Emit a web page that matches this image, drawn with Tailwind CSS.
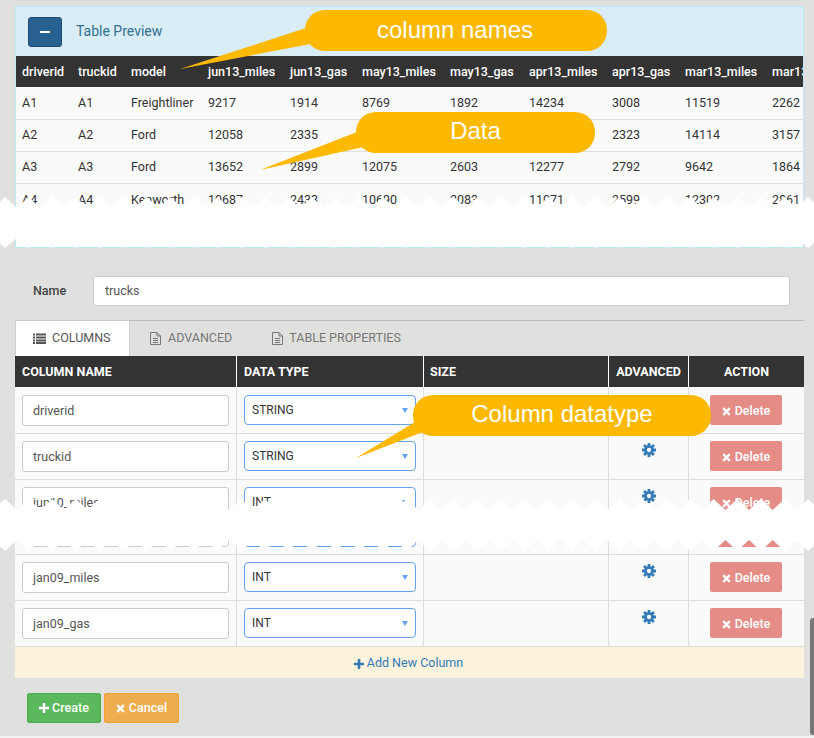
<!DOCTYPE html>
<html>
<head>
<meta charset="UTF-8">
<title>Table Preview</title>
<script src="https://cdn.jsdelivr.net/npm/@tailwindcss/browser@4"></script>
</head>
<body class="relative h-[738px] w-[814px] overflow-hidden bg-[#e0e0de] font-['Roboto',sans-serif] text-[12.5px] text-[#333]">

<!-- preview panel -->
<div class="ml-[15px] mt-[6px] h-[242px] w-[789px] overflow-hidden border-x border-b border-t border-[#bce8f1] bg-white">
  <div class="flex h-[49px] items-center bg-[#d9edf7] pl-[12px]">
    <div class="flex h-[30px] w-[34px] items-center justify-center rounded-[3px] border border-[#204d74] bg-[#286090]">
      <div class="h-[2px] w-[10px] bg-white"></div>
    </div>
    <div class="ml-[14px] text-[14px] text-[#31708f]">Table Preview</div>
  </div>
  <div class="w-[900px]">
    <div class="grid h-[31px] grid-cols-[56px_53px_77px_82px_72px_88px_79px_83px_73px_87px_80px] items-center bg-[#333] pt-[2px] text-[12.5px] font-medium text-white [&>div]:pl-[6px]">
      <div>driverid</div><div>truckid</div><div>model</div><div>jun13_miles</div><div>jun13_gas</div><div>may13_miles</div><div>may13_gas</div><div>apr13_miles</div><div>apr13_gas</div><div>mar13_miles</div><div>mar13_gas</div>
    </div>
    <div class="grid h-[33px] grid-cols-[56px_53px_77px_82px_72px_88px_79px_83px_73px_87px_80px] items-center border-b border-[#ddd] bg-[#fafafa] [&>div]:pl-[6px]">
      <div>A1</div><div>A1</div><div>Freightliner</div><div>9217</div><div>1914</div><div>8769</div><div>1892</div><div>14234</div><div>3008</div><div>11519</div><div>2262</div>
    </div>
    <div class="grid h-[32px] grid-cols-[56px_53px_77px_82px_72px_88px_79px_83px_73px_87px_80px] items-center border-b border-[#ddd] bg-[#fafafa] [&>div]:pl-[6px]">
      <div>A2</div><div>A2</div><div>Ford</div><div>12058</div><div>2335</div><div>11211</div><div>2472</div><div>12396</div><div>2323</div><div>14114</div><div>3157</div>
    </div>
    <div class="grid h-[32px] grid-cols-[56px_53px_77px_82px_72px_88px_79px_83px_73px_87px_80px] items-center border-b border-[#ddd] bg-[#fafafa] [&>div]:pl-[6px]">
      <div>A3</div><div>A3</div><div>Ford</div><div>13652</div><div>2899</div><div>12075</div><div>2603</div><div>12277</div><div>2792</div><div>9642</div><div>1864</div>
    </div>
    <div class="grid h-[32px] grid-cols-[56px_53px_77px_82px_72px_88px_79px_83px_73px_87px_80px] items-center bg-[#fafafa] [&>div]:pl-[6px]">
      <div>A4</div><div>A4</div><div>Kenworth</div><div>10687</div><div>2433</div><div>10690</div><div>2083</div><div>11071</div><div>2599</div><div>12302</div><div>2861</div>
    </div>
  </div>
</div>

<!-- name -->
<div class="ml-[33px] mt-[28px] flex h-[30px] w-[757px] items-center">
  <div class="w-[60px] font-medium text-[#444]">Name</div>
  <div class="flex h-[30px] flex-1 items-center rounded-[3px] border border-[#ccc] bg-white pl-[11px] text-[#555]">trucks</div>
</div>

<!-- tabs -->
<div class="ml-[15px] mt-[14px] flex h-[36px] w-[789px] border-t border-[#bbb] text-[12.5px] text-[#777]">
  <div class="-mt-px flex h-[36px] w-[115px] items-center border-x border-t border-[#ccc] bg-white pl-[17px] text-[#555]">
    <svg class="mr-[6px]" width="13" height="11" viewBox="0 0 13 11" fill="#555"><rect x="0" y="0.5" width="2" height="2"/><rect x="3" y="0.5" width="10" height="2"/><rect x="0" y="3.5" width="2" height="2"/><rect x="3" y="3.5" width="10" height="2"/><rect x="0" y="6.5" width="2" height="2"/><rect x="3" y="6.5" width="10" height="2"/><rect x="0" y="9" width="2" height="2"/><rect x="3" y="9" width="10" height="2"/></svg>
    <span>COLUMNS</span>
  </div>
  <div class="ml-[20px] flex items-center">
    <svg class="mr-[7px]" width="11" height="13" viewBox="0 0 11 13" fill="none" stroke="#777"><path d="M.5.5h6.5l3.5 3.5v8.5h-10zM7 .5v3.5h3.5M3 6.5h5M3 8.5h5M3 10.5h5"/></svg>
    <span>ADVANCED</span>
  </div>
  <div class="ml-[40px] flex items-center">
    <svg class="mr-[6px]" width="11" height="13" viewBox="0 0 11 13" fill="none" stroke="#777"><path d="M.5.5h6.5l3.5 3.5v8.5h-10zM7 .5v3.5h3.5M3 6.5h5M3 8.5h5M3 10.5h5"/></svg>
    <span>TABLE PROPERTIES</span>
  </div>
</div>

<!-- columns table -->
<div class="ml-[15px] w-[789px]">
  <div class="grid h-[31px] grid-cols-[222px_187px_185px_80px_115px] items-center bg-[#333] font-bold text-white [&>div]:flex [&>div]:h-full [&>div]:items-center [&>div]:pt-[2px]">
    <div class="border-r border-white pl-[7px]">COLUMN NAME</div>
    <div class="border-r border-white pl-[7px]">DATA TYPE</div>
    <div class="border-r border-white pl-[6px]">SIZE</div>
    <div class="justify-center border-r border-white">ADVANCED</div>
    <div class="justify-center">ACTION</div>
  </div>

  <div class="grid h-[47px] grid-cols-[222px_187px_185px_80px_115px] border-b border-[#ddd] bg-[#fafafa] [&>div]:pt-[8px]">
    <div class="border-r border-[#ddd] pl-[7px]"><div class="flex h-[31px] w-[207px] items-center rounded-[3px] border border-[#ccc] bg-white pl-[10px] pt-[2px] text-[#555]">driverid</div></div>
    <div class="border-r border-[#ddd] pl-[7px]"><div class="flex h-[30px] w-[172px] items-center justify-between rounded-[4px] border border-[#66a3ee] bg-white pl-[7px] pr-[7px] text-[12px]">STRING<span class="h-0 w-0 border-x-[3px] border-t-[5px] border-x-transparent border-t-[#66a3ee]"></span></div></div>
    <div class="border-r border-[#ddd]"></div>
    <div class="flex justify-center border-r border-[#ddd]"><svg class="mt-[2px]" width="14" height="14" viewBox="0 0 15 15"><path d="M7.5 0v15M0 7.5h15M2.2 2.2l10.6 10.6M12.8 2.2L2.2 12.8" stroke="#337ab7" stroke-width="3"/><circle cx="7.5" cy="7.5" r="5.2" fill="#337ab7"/><circle cx="7.5" cy="7.5" r="2.3" fill="#fafafa"/></svg></div>
    <div class="flex justify-center pr-[1px]"><div class="flex h-[30px] w-[72px] items-center justify-center gap-[4px] rounded-[2px] bg-[#e58c87] pt-[2px] font-medium text-white"><svg width="9" height="9" viewBox="0 0 9 9"><path d="M1.2 1.2l6.6 6.6M7.8 1.2L1.2 7.8" stroke="#fff" stroke-width="2.4"/></svg>Delete</div></div>
  </div>

  <div class="grid h-[46px] grid-cols-[222px_187px_185px_80px_115px] border-b border-[#ddd] bg-[#fafafa] [&>div]:pt-[7px]">
    <div class="border-r border-[#ddd] pl-[7px]"><div class="flex h-[31px] w-[207px] items-center rounded-[3px] border border-[#ccc] bg-white pl-[10px] pt-[2px] text-[#555]">truckid</div></div>
    <div class="border-r border-[#ddd] pl-[7px]"><div class="flex h-[30px] w-[172px] items-center justify-between rounded-[4px] border border-[#66a3ee] bg-white pl-[7px] pr-[7px] text-[12px]">STRING<span class="h-0 w-0 border-x-[3px] border-t-[5px] border-x-transparent border-t-[#66a3ee]"></span></div></div>
    <div class="border-r border-[#ddd]"></div>
    <div class="flex justify-center border-r border-[#ddd]"><svg class="mt-[2px]" width="14" height="14" viewBox="0 0 15 15"><path d="M7.5 0v15M0 7.5h15M2.2 2.2l10.6 10.6M12.8 2.2L2.2 12.8" stroke="#337ab7" stroke-width="3"/><circle cx="7.5" cy="7.5" r="5.2" fill="#337ab7"/><circle cx="7.5" cy="7.5" r="2.3" fill="#fafafa"/></svg></div>
    <div class="flex justify-center pr-[1px]"><div class="flex h-[30px] w-[72px] items-center justify-center gap-[4px] rounded-[2px] bg-[#e58c87] pt-[2px] font-medium text-white"><svg width="9" height="9" viewBox="0 0 9 9"><path d="M1.2 1.2l6.6 6.6M7.8 1.2L1.2 7.8" stroke="#fff" stroke-width="2.4"/></svg>Delete</div></div>
  </div>

  <!-- row cut by the tear -->
  <div class="grid h-[30px] grid-cols-[222px_187px_185px_80px_115px] overflow-hidden bg-[#fafafa] [&>div]:pt-[7px]">
    <div class="border-r border-[#ddd] pl-[7px]"><div class="flex h-[31px] w-[207px] items-center rounded-[3px] border border-[#ccc] bg-white pl-[10px] pt-[2px] text-[#555]">jun10_miles</div></div>
    <div class="border-r border-[#ddd] pl-[7px]"><div class="flex h-[30px] w-[172px] items-center justify-between rounded-[4px] border border-[#66a3ee] bg-white pl-[7px] pr-[7px] text-[12px]">INT<span class="h-0 w-0 border-x-[3px] border-t-[5px] border-x-transparent border-t-[#66a3ee]"></span></div></div>
    <div class="border-r border-[#ddd]"></div>
    <div class="flex justify-center border-r border-[#ddd]"><svg class="mt-[2px]" width="14" height="14" viewBox="0 0 15 15"><path d="M7.5 0v15M0 7.5h15M2.2 2.2l10.6 10.6M12.8 2.2L2.2 12.8" stroke="#337ab7" stroke-width="3"/><circle cx="7.5" cy="7.5" r="5.2" fill="#337ab7"/><circle cx="7.5" cy="7.5" r="2.3" fill="#fafafa"/></svg></div>
    <div class="flex justify-center pr-[1px]"><div class="flex h-[30px] w-[72px] items-center justify-center gap-[4px] rounded-[2px] bg-[#e58c87] pt-[2px] font-medium text-white"><svg width="9" height="9" viewBox="0 0 9 9"><path d="M1.2 1.2l6.6 6.6M7.8 1.2L1.2 7.8" stroke="#fff" stroke-width="2.4"/></svg>Delete</div></div>
  </div>
  <div class="grid h-[45px] grid-cols-[222px_187px_185px_80px_115px] border-b border-[#ddd] bg-[#fafafa]">
    <div class="flex items-end border-r border-[#ddd] pb-[7px] pl-[7px]"><div class="h-[31px] w-[207px] rounded-[3px] border border-[#ccc] bg-white"></div></div>
    <div class="flex items-end border-r border-[#ddd] pb-[7px] pl-[7px]"><div class="h-[30px] w-[172px] rounded-[4px] border border-[#66a3ee] bg-white"></div></div>
    <div class="border-r border-[#ddd]"></div>
    <div class="border-r border-[#ddd]"></div>
    <div class="flex items-end justify-center pb-[7px] pr-[1px]"><div class="h-[30px] w-[72px] rounded-[2px] bg-[#e58c87]"></div></div>
  </div>

  <div class="grid h-[46px] grid-cols-[222px_187px_185px_80px_115px] border-b border-[#ddd] bg-[#fafafa] [&>div]:pt-[7px]">
    <div class="border-r border-[#ddd] pl-[7px]"><div class="flex h-[31px] w-[207px] items-center rounded-[3px] border border-[#ccc] bg-white pl-[10px] pt-[2px] text-[#555]">jan09_miles</div></div>
    <div class="border-r border-[#ddd] pl-[7px]"><div class="flex h-[30px] w-[172px] items-center justify-between rounded-[4px] border border-[#66a3ee] bg-white pl-[7px] pr-[7px] text-[12px]">INT<span class="h-0 w-0 border-x-[3px] border-t-[5px] border-x-transparent border-t-[#66a3ee]"></span></div></div>
    <div class="border-r border-[#ddd]"></div>
    <div class="flex justify-center border-r border-[#ddd]"><svg class="mt-[2px]" width="14" height="14" viewBox="0 0 15 15"><path d="M7.5 0v15M0 7.5h15M2.2 2.2l10.6 10.6M12.8 2.2L2.2 12.8" stroke="#337ab7" stroke-width="3"/><circle cx="7.5" cy="7.5" r="5.2" fill="#337ab7"/><circle cx="7.5" cy="7.5" r="2.3" fill="#fafafa"/></svg></div>
    <div class="flex justify-center pr-[1px]"><div class="flex h-[30px] w-[72px] items-center justify-center gap-[4px] rounded-[2px] bg-[#e58c87] pt-[2px] font-medium text-white"><svg width="9" height="9" viewBox="0 0 9 9"><path d="M1.2 1.2l6.6 6.6M7.8 1.2L1.2 7.8" stroke="#fff" stroke-width="2.4"/></svg>Delete</div></div>
  </div>

  <div class="grid h-[46px] grid-cols-[222px_187px_185px_80px_115px] border-b border-[#ddd] bg-[#fafafa] [&>div]:pt-[7px]">
    <div class="border-r border-[#ddd] pl-[7px]"><div class="flex h-[31px] w-[207px] items-center rounded-[3px] border border-[#ccc] bg-white pl-[10px] pt-[2px] text-[#555]">jan09_gas</div></div>
    <div class="border-r border-[#ddd] pl-[7px]"><div class="flex h-[30px] w-[172px] items-center justify-between rounded-[4px] border border-[#66a3ee] bg-white pl-[7px] pr-[7px] text-[12px]">INT<span class="h-0 w-0 border-x-[3px] border-t-[5px] border-x-transparent border-t-[#66a3ee]"></span></div></div>
    <div class="border-r border-[#ddd]"></div>
    <div class="flex justify-center border-r border-[#ddd]"><svg class="mt-[2px]" width="14" height="14" viewBox="0 0 15 15"><path d="M7.5 0v15M0 7.5h15M2.2 2.2l10.6 10.6M12.8 2.2L2.2 12.8" stroke="#337ab7" stroke-width="3"/><circle cx="7.5" cy="7.5" r="5.2" fill="#337ab7"/><circle cx="7.5" cy="7.5" r="2.3" fill="#fafafa"/></svg></div>
    <div class="flex justify-center pr-[1px]"><div class="flex h-[30px] w-[72px] items-center justify-center gap-[4px] rounded-[2px] bg-[#e58c87] pt-[2px] font-medium text-white"><svg width="9" height="9" viewBox="0 0 9 9"><path d="M1.2 1.2l6.6 6.6M7.8 1.2L1.2 7.8" stroke="#fff" stroke-width="2.4"/></svg>Delete</div></div>
  </div>

  <div class="flex h-[31px] items-center justify-center gap-[3px] bg-[#fdf3dc] pr-[2px] pt-[2px] text-[#337ab7]">
    <svg width="10" height="10" viewBox="0 0 10 10"><path d="M5 0v10M0 5h10" stroke="#337ab7" stroke-width="2.6"/></svg>Add New Column
  </div>
</div>

<div class="ml-[27px] mt-[15px] flex gap-[3px] font-medium text-white">
  <div class="flex h-[30px] w-[74px] items-center justify-center gap-[3px] rounded-[2px] border border-[#4cae4c] bg-[#5cb85c]"><svg width="10" height="10" viewBox="0 0 10 10"><path d="M5 0v10M0 5h10" stroke="#fff" stroke-width="2.4"/></svg>Create</div>
  <div class="flex h-[30px] w-[75px] items-center justify-center gap-[4px] rounded-[2px] border border-[#eea236] bg-[#f0ad4e]"><svg width="9" height="9" viewBox="0 0 9 9"><path d="M1.2 1.2l6.6 6.6M7.8 1.2L1.2 7.8" stroke="#fff" stroke-width="2.4"/></svg>Cancel</div>
</div>

<!-- paper tears, callout tails -->
<svg class="absolute left-0 top-0" width="814" height="738" viewBox="0 0 814 738">
  <polygon id="tear1" fill="#fff"/>
  <polygon id="tear2" fill="#fff"/>
  <polygon points="312,26 180,69 316,43" fill="#fdb900"/>
  <polygon points="362,130 260,170 368,146" fill="#fdb900"/>
  <polygon points="428,414 356,458 428,430" fill="#fdb900"/>
</svg>

<!-- callouts -->
<div class="absolute left-[305px] top-[10px] flex h-[41px] w-[302px] items-center justify-center rounded-[20px] bg-[#fdb900] pb-[2px] pr-[2px] font-['Liberation_Sans',sans-serif] text-[24px] text-white">column names</div>
<div class="absolute left-[356px] top-[112px] flex h-[41px] w-[239px] items-center justify-center rounded-[20px] bg-[#fdb900] pb-[3px] font-['Liberation_Sans',sans-serif] text-[24px] text-white">Data</div>
<div class="absolute left-[413px] top-[395px] flex h-[41px] w-[298px] items-center justify-center rounded-[20px] bg-[#fdb900] pb-[3px] font-['Liberation_Sans',sans-serif] text-[24px] text-white">Column datatype</div>

<!-- scrollbar and bottom edge -->
<div class="absolute left-[810px] top-[618px] h-[117px] w-[4px] rounded-l-[3px] bg-[#777]"></div>
<div class="absolute bottom-0 left-0 h-[2px] w-full bg-[#f2f2f0]"></div>

<script>
  function tear(id, topPeak, topValley, botValley, botPeak) {
    let step = 23.62, top = [], bot = []
    for (let k = -1; k < 36; k++) {
      let x = 5 + step * k
      top.push(x + ',' + topPeak, (x + step / 2) + ',' + topValley)
      bot.unshift((x + step / 2) + ',' + botValley, x + ',' + botPeak)
    }
    document.getElementById(id).setAttribute('points', top.concat(bot).join(' '))
  }
  tear('tear1', 197, 208, 238, 248)
  tear('tear2', 499, 510, 540, 551)
</script>
</body>
</html>
